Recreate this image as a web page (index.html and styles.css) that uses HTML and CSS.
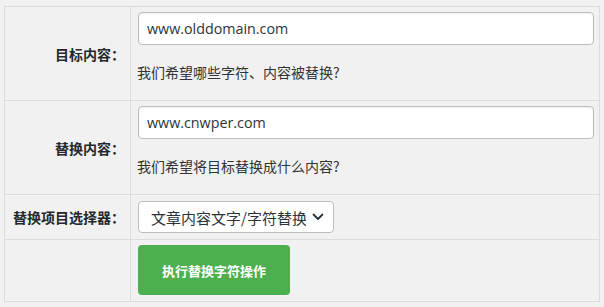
FILE: index.html
```html
<!DOCTYPE html>
<html lang="zh-CN">
<head>
<meta charset="utf-8">
<title>替换</title>
<link rel="stylesheet" href="styles.css">
</head>
<body>
<div class="form-table">
  <div class="th row1">目标内容：</div>
  <div class="td row1">
    <input class="text-input" type="text" value="www.olddomain.com">
    <p class="desc">我们希望哪些字符、内容被替换?</p>
  </div>

  <div class="th row2">替换内容：</div>
  <div class="td row2">
    <input class="text-input" type="text" value="www.cnwper.com">
    <p class="desc">我们希望将目标替换成什么内容?</p>
  </div>

  <div class="th row3">替换项目选择器：</div>
  <div class="td row3">
    <div class="select-wrap">
      <select class="select">
        <option>文章内容文字/字符替换</option>
      </select>
      <svg class="chevron" width="12" height="8" viewBox="0 0 12 8"><polyline points="1.5,1.5 6,6 10.5,1.5" fill="none" stroke="#2c3338" stroke-width="1.8" stroke-linecap="round" stroke-linejoin="round"/></svg>
    </div>
  </div>

  <div class="th row4"></div>
  <div class="td row4">
    <button class="btn" type="button">执行替换字符操作</button>
  </div>
</div>
</body>
</html>
```
FILE: styles.css
```css
html, body {
  margin: 0;
  padding: 0;
  background: #f1f1f1;
}
body {
  padding: 6px 4px 0 4px;
  font-family: "Noto Sans CJK SC", "Noto Sans", sans-serif;
  color: #333;
}
.form-table {
  display: grid;
  grid-template-columns: 126px 1fr;
  border-top: 1px solid #dcdcdc;
  border-left: 1px solid #dcdcdc;
  background: #f1f1f1;
}
.th, .td {
  box-sizing: border-box;
  border-right: 1px solid #dcdcdc;
  border-bottom: 1px solid #dcdcdc;
}
.th {
  display: flex;
  align-items: center;
  justify-content: flex-end;
  padding-right: 5px;
  font-size: 14px;
  font-weight: bold;
  color: #23282d;
  white-space: nowrap;
}
.td {
  padding: 5px 5px 0 7px;
}
.row1, .row2 { height: 94px; }
.row3 { height: 45px; }
.row4 { height: 62px; }
.row3.td { padding-top: 6px; }

.text-input {
  display: block;
  box-sizing: border-box;
  width: 100%;
  height: 33px;
  margin: 0;
  padding: 0 8px;
  border: 1px solid #bdbdbd;
  border-radius: 4px;
  background: #fff;
  box-shadow: inset 0 1px 2px rgba(0,0,0,0.07);
  font-family: "Open Sans", "Noto Sans CJK SC", sans-serif;
  font-size: 14.3px;
  color: #2c3338;
}
.desc {
  margin: 17px 0 0 -1px;
  font-size: 14px;
  line-height: 20px;
  color: #333;
}
.select-wrap {
  position: relative;
  width: 196px;
  height: 32px;
}
.select {
  appearance: none;
  -webkit-appearance: none;
  box-sizing: border-box;
  width: 196px;
  height: 32px;
  margin: 0;
  padding: 0 27px 0 12px;
  border: 1px solid #bdbdbd;
  border-radius: 4px;
  background: #fff;
  font-family: "Noto Sans CJK SC", sans-serif;
  font-size: 15px;
  color: #2c3338;
  overflow: hidden;
}
.chevron {
  position: absolute;
  right: 10px;
  top: 12px;
  pointer-events: none;
}
.btn {
  display: block;
  width: 152px;
  height: 50px;
  margin: 0;
  padding: 0;
  border: none;
  border-radius: 4px;
  background: #4caf50;
  color: #fff;
  font-family: "Noto Sans CJK SC", sans-serif;
  font-size: 13px;
  font-weight: bold;
}
```
